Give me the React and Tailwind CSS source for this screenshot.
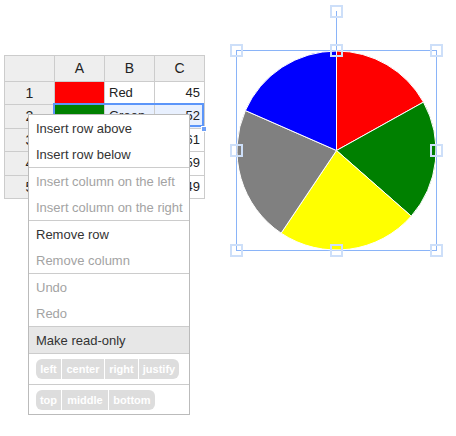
import React from 'react';

const ROWS = [
  { n: 1, color: '#ff0000', name: 'Red', value: 45 },
  { n: 2, color: '#008000', name: 'Green', value: 52 },
  { n: 3, color: '#ffff00', name: 'Yellow', value: 61 },
  { n: 4, color: '#808080', name: 'Gray', value: 59 },
  { n: 5, color: '#0000ff', name: 'Blue', value: 49 },
];

const MENU = [
  { label: 'Insert row above' },
  { label: 'Insert row below' },
  { sep: true },
  { label: 'Insert column on the left', disabled: true },
  { label: 'Insert column on the right', disabled: true },
  { sep: true },
  { label: 'Remove row' },
  { label: 'Remove column', disabled: true },
  { sep: true },
  { label: 'Undo', disabled: true },
  { label: 'Redo', disabled: true },
  { sep: true },
  { label: 'Make read-only', active: true },
];

// pie slice paths, clockwise from 12 o'clock
function slices(cx, cy, r) {
  const total = ROWS.reduce((s, d) => s + d.value, 0);
  let a = 0;
  return ROWS.map(d => {
    const a0 = a;
    a += (d.value / total) * Math.PI * 2;
    const x0 = cx + r * Math.sin(a0), y0 = cy - r * Math.cos(a0);
    const x1 = cx + r * Math.sin(a), y1 = cy - r * Math.cos(a);
    const large = a - a0 > Math.PI ? 1 : 0;
    return { color: d.color, d: `M${cx} ${cy} L${x0} ${y0} A${r} ${r} 0 ${large} 1 ${x1} ${y1} Z` };
  });
}

function Pills({ items }) {
  return (
    <div className="flex gap-px">
      {items.map(([label, w], i) => (
        <span
          key={label}
          style={{ width: w }}
          className={`h-[20px] leading-[20px] text-center text-[11px] font-bold text-white bg-[#dddddd] ${
            i === 0 ? 'rounded-l-[6px]' : ''
          } ${i === items.length - 1 ? 'rounded-r-[6px]' : ''}`}
        >
          {label}
        </span>
      ))}
    </div>
  );
}

function Handle({ className }) {
  return <div className={`absolute w-[13px] h-[13px] border-2 border-[#cddff9] ${className}`} />;
}

export default function App() {
  const cell = 'border-r border-b border-[#cccccc] overflow-hidden whitespace-nowrap';
  const head = `${cell} bg-[#eeeeee] text-center text-[#222]`;

  return (
    <div
      className="relative flex items-start w-[456px] h-[436px] bg-white text-[13px] text-[#222]"
      style={{ fontFamily: '"Liberation Sans", Arial, sans-serif' }}
    >
      {/* Sheet */}
      <div className="relative ml-[4px] mt-[55px]">
        <div className="grid grid-cols-[50px_50px_50px_50px] border-l border-t border-[#cccccc]">
          <div className={`${head} h-[26px]`} />
          {['A', 'B', 'C'].map(c => (
            <div key={c} className={`${head} h-[26px] leading-[25px] text-[14px]`}>{c}</div>
          ))}
          {ROWS.map(r => (
            <React.Fragment key={r.n}>
              <div className={`${head} h-[23.4px] leading-[22px] text-[14px]`}>{r.n}</div>
              <div className={`${cell} h-[23.4px]`} style={{ background: r.color }} />
              <div className={`${cell} h-[23.4px] leading-[22px] px-[4px] ${r.n === 2 ? 'bg-[#e8f0fe]' : ''}`}>{r.name}</div>
              <div className={`${cell} h-[23.4px] leading-[22px] px-[4px] text-right ${r.n === 2 ? 'bg-[#e8f0fe]' : ''}`}>{r.value}</div>
            </React.Fragment>
          ))}
        </div>
        {/* selection A2:C2 */}
        <div className="absolute left-[49px] top-[48px] w-[151px] h-[24.4px] border-2 border-[#5b95f9]" />
        <div className="absolute left-[197px] top-[71px] w-[6px] h-[6px] bg-[#6ea0f7] border border-white" />
      </div>

      {/* Chart with selection frame */}
      <div className="relative ml-[31px] mt-[50px] w-[201px] h-[201px] border border-[#8ab4f8]">
        <svg width="201" height="201" className="absolute -left-px -top-px">
          {slices(100.5, 100.5, 99.5).map((s, i) => (
            <path key={i} d={s.d} fill={s.color} stroke="#ffffff" strokeWidth="1" strokeLinejoin="round" />
          ))}
        </svg>
        <div className="absolute left-[99px] -top-[40px] w-px h-[39px] bg-[#8ab4f8]" />
        <Handle className="left-[93px] -top-[46px]" />
        <Handle className="-left-[7px] -top-[7px]" />
        <Handle className="left-[93px] -top-[7px]" />
        <Handle className="-right-[7px] -top-[7px]" />
        <Handle className="-left-[7px] top-[93px]" />
        <Handle className="-right-[7px] top-[93px]" />
        <Handle className="-left-[7px] -bottom-[7px]" />
        <Handle className="left-[93px] -bottom-[7px]" />
        <Handle className="-right-[7px] -bottom-[7px]" />
      </div>

      {/* Context menu */}
      <div className="absolute left-[28px] top-[114px] w-[162px] bg-white border border-[#bbbbbb]">
        {MENU.map((m, i) =>
          m.sep ? (
            <div key={i} className="h-px bg-[#cccccc]" />
          ) : (
            <div
              key={i}
              className={`h-[26px] pt-[2px] leading-[24px] pl-[7px] whitespace-nowrap ${
                m.disabled ? 'text-[#a3a3a3]' : 'text-[#333333]'
              } ${m.active ? 'bg-[#e7e7e7]' : ''}`}
            >
              {m.label}
            </div>
          )
        )}
        <div className="h-px bg-[#cccccc]" />
        <div className="px-[7px] py-[5px]">
          <Pills items={[['left', 25], ['center', 42], ['right', 33], ['justify', 40]]} />
        </div>
        <div className="h-px bg-[#cccccc]" />
        <div className="px-[7px] pt-[5px] pb-[4px]">
          <Pills items={[['top', 25], ['middle', 46], ['bottom', 46]]} />
        </div>
      </div>
    </div>
  );
}
